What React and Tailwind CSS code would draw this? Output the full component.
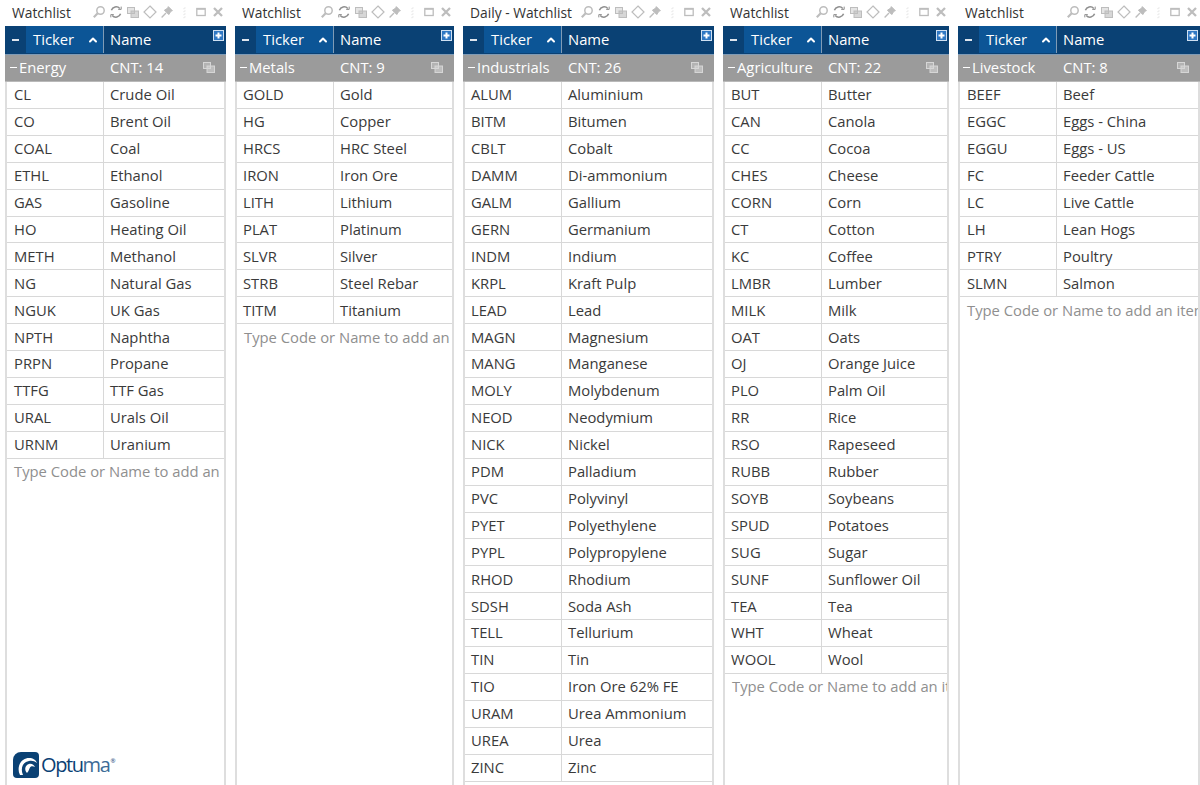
import React from 'react';
import { ChevronUp } from 'lucide-react';

const panels = [
  {
    title: 'Watchlist', width: 'w-[221px]', cellPad: 'pl-[7px]', group: 'Energy', cnt: 14,
    rows: [['CL', 'Crude Oil'], ['CO', 'Brent Oil'], ['COAL', 'Coal'], ['ETHL', 'Ethanol'], ['GAS', 'Gasoline'], ['HO', 'Heating Oil'], ['METH', 'Methanol'], ['NG', 'Natural Gas'], ['NGUK', 'UK Gas'], ['NPTH', 'Naphtha'], ['PRPN', 'Propane'], ['TTFG', 'TTF Gas'], ['URAL', 'Urals Oil'], ['URNM', 'Uranium']],
    logo: true,
  },
  {
    title: 'Watchlist', width: 'w-[219px]', cellPad: 'pl-[6px]', group: 'Metals', cnt: 9,
    rows: [['GOLD', 'Gold'], ['HG', 'Copper'], ['HRCS', 'HRC Steel'], ['IRON', 'Iron Ore'], ['LITH', 'Lithium'], ['PLAT', 'Platinum'], ['SLVR', 'Silver'], ['STRB', 'Steel Rebar'], ['TITM', 'Titanium']],
  },
  {
    title: 'Daily - Watchlist', width: 'w-[251px]', cellPad: 'pl-[6px]', group: 'Industrials', cnt: 26,
    rows: [['ALUM', 'Aluminium'], ['BITM', 'Bitumen'], ['CBLT', 'Cobalt'], ['DAMM', 'Di-ammonium'], ['GALM', 'Gallium'], ['GERN', 'Germanium'], ['INDM', 'Indium'], ['KRPL', 'Kraft Pulp'], ['LEAD', 'Lead'], ['MAGN', 'Magnesium'], ['MANG', 'Manganese'], ['MOLY', 'Molybdenum'], ['NEOD', 'Neodymium'], ['NICK', 'Nickel'], ['PDM', 'Palladium'], ['PVC', 'Polyvinyl'], ['PYET', 'Polyethylene'], ['PYPL', 'Polypropylene'], ['RHOD', 'Rhodium'], ['SDSH', 'Soda Ash'], ['TELL', 'Tellurium'], ['TIN', 'Tin'], ['TIO', 'Iron Ore 62% FE'], ['URAM', 'Urea Ammonium'], ['UREA', 'Urea'], ['ZINC', 'Zinc']],
  },
  {
    title: 'Watchlist', width: 'w-[226px]', cellPad: 'pl-[6px]', group: 'Agriculture', cnt: 22,
    rows: [['BUT', 'Butter'], ['CAN', 'Canola'], ['CC', 'Cocoa'], ['CHES', 'Cheese'], ['CORN', 'Corn'], ['CT', 'Cotton'], ['KC', 'Coffee'], ['LMBR', 'Lumber'], ['MILK', 'Milk'], ['OAT', 'Oats'], ['OJ', 'Orange Juice'], ['PLO', 'Palm Oil'], ['RR', 'Rice'], ['RSO', 'Rapeseed'], ['RUBB', 'Rubber'], ['SOYB', 'Soybeans'], ['SPUD', 'Potatoes'], ['SUG', 'Sugar'], ['SUNF', 'Sunflower Oil'], ['TEA', 'Tea'], ['WHT', 'Wheat'], ['WOOL', 'Wool']],
  },
  {
    title: 'Watchlist', width: 'w-[242px]', cellPad: 'pl-[7px]', group: 'Livestock', cnt: 8,
    rows: [['BEEF', 'Beef'], ['EGGC', 'Eggs - China'], ['EGGU', 'Eggs - US'], ['FC', 'Feeder Cattle'], ['LC', 'Live Cattle'], ['LH', 'Lean Hogs'], ['PTRY', 'Poultry'], ['SLMN', 'Salmon']],
  },
];

const CopyIcon = ({ className }) => (
  <svg viewBox="0 0 12 11" className={className} fill="none" stroke="currentColor">
    <rect x="0.5" y="0.5" width="7" height="6" fill="currentColor" fillOpacity="0.4" />
    <rect x="4" y="4" width="7.5" height="6.5" fill="currentColor" fillOpacity="0.6" />
  </svg>
);

// toolbar drawings, all on a 14px box so they sit evenly in their slots
const SearchIcon = () => (
  <svg viewBox="0 0 14 14" className="w-[14px] h-[14px]" fill="none" stroke="currentColor">
    <circle cx="8.5" cy="5.5" r="3.7" strokeWidth="1.5" />
    <path d="M5.7 8.3 1.8 12.2" strokeWidth="2.2" />
  </svg>
);

const RefreshIcon = () => (
  <svg viewBox="0 0 14 14" className="w-[14px] h-[14px] text-[#8f8f8f]" fill="none" stroke="currentColor" strokeWidth="1.5">
    <path d="M2.4 5.2A5 5 0 0 1 10.8 3.4" />
    <path d="M11.6 8.8A5 5 0 0 1 3.2 10.6" />
    <path d="M9.2 4.4h3V1.6M4.8 9.6h-3v2.8" strokeWidth="1" />
  </svg>
);

const DiamondIcon = () => (
  <svg viewBox="0 0 14 14" className="w-[14px] h-[14px]" fill="none" stroke="currentColor" strokeWidth="1.2">
    <path d="M7 1 13 7 7 13 1 7z" />
  </svg>
);

const PinIcon = () => (
  <svg viewBox="0 0 14 14" className="w-[14px] h-[14px]" fill="currentColor" stroke="currentColor">
    <path d="M8.3 1.6 12.4 5.7 10.9 6.2 8.8 9.6 4.4 5.2 7.8 3.1z" />
    <path d="M6 8 1.6 12.4" strokeWidth="1.4" />
  </svg>
);

const GripIcon = () => (
  <svg viewBox="0 0 14 14" className="w-[14px] h-[14px] text-[#ececec]" fill="none" stroke="currentColor" strokeWidth="1.4">
    <path d="M8.5 2.5 6.5 4M8.5 5.500 6.500 7M8.500 8.500 6.500 10M8.500 11.500 6.500 13" />
  </svg>
);

const SquareIcon = () => (
  <svg viewBox="0 0 14 14" className="w-[14px] h-[14px]" fill="none" stroke="currentColor">
    <rect x="2.8" y="3.5" width="8.4" height="7" strokeWidth="1.3" />
    <path d="M2.8 4h8.4" strokeWidth="1.6" />
  </svg>
);

const CloseIcon = () => (
  <svg viewBox="0 0 14 14" className="w-[14px] h-[14px]" fill="none" stroke="currentColor" strokeWidth="2.3">
    <path d="M3 3 11 11M11 3 3 11" />
  </svg>
);

const PlusBox = () => (
  <svg viewBox="0 0 11 11" className="w-[11px] h-[11px]">
    <rect x="0.5" y="0.5" width="10" height="10" fill="#2f78c4" stroke="#cfe0f2" />
    <path d="M5.5 2.5v6M2.5 5.5h6" stroke="white" strokeWidth="2" />
  </svg>
);

const toolbar = [SearchIcon, RefreshIcon, null, DiamondIcon, PinIcon, GripIcon, SquareIcon, CloseIcon];

function TitleBar({ title }) {
  return (
    <div className="h-[26px] shrink-0 flex items-center justify-between pl-[7px] text-[13.8px] text-[#333]">
      <span>{title}</span>
      <div className="flex items-center text-[#bdbdbd] pb-[2px]">
        {toolbar.map((Icon, i) => (
          <div key={i} className="w-[17px] flex justify-center">
            {Icon ? <Icon /> : <CopyIcon className="w-[12px] h-[11px]" />}
          </div>
        ))}
      </div>
    </div>
  );
}

function Panel({ panel }) {
  return (
    <div className={`${panel.width} shrink-0 flex flex-col`}>
      <TitleBar title={panel.title} />
      <div className="h-[29px] shrink-0 flex bg-[#0a4174] text-white border-b border-[#7f9bb6] pb-[1px]">
        <div className="w-[21px] flex items-center justify-center">
          <div className="w-[7px] h-[2px] bg-[#dfe6ee]" />
        </div>
        <div className="w-[77px] bg-[#0c5596] flex items-center justify-between pl-[7px] pr-[4px]">
          <span>Ticker</span>
          <ChevronUp size={12} strokeWidth={4} />
        </div>
        <div className="w-[1px] bg-[#7f9bb6]" />
        <div className="flex-1 flex items-center pl-[6px] relative">
          <span>Name</span>
          <div className="absolute top-[4px] right-[2px] flex">
            <PlusBox />
          </div>
        </div>
      </div>
      <div className="h-[27px] shrink-0 flex bg-[#9b9b9b] text-white border-b border-[#b9b9b9] pb-[1px]">
        <div className="w-[99px] pl-[5px] flex items-center gap-[2px] shrink-0">
          <div className="w-[7px] h-[1px] bg-white" />
          <span>{panel.group}</span>
        </div>
        <div className="flex-1 flex items-center justify-between pl-[6px] pr-[11px]">
          <span>CNT: {panel.cnt}</span>
          <CopyIcon className="w-[12px] h-[11px] text-[#d6d6d6]" />
        </div>
      </div>
      <div className="flex-1 min-h-0 flex flex-col border-x-2 border-[#dedede] overflow-hidden relative text-[#3a3a3a]">
        {panel.rows.map(([code, name]) => (
          <div key={code} className="h-[26.92px] shrink-0 flex items-center border-b border-[#d8d8d8]">
            <div className={`w-[97px] h-full flex items-center ${panel.cellPad} pb-[1px] border-r border-[#d8d8d8] shrink-0`}>{code}</div>
            <div className="pl-[6px] pb-[1px] whitespace-nowrap">{name}</div>
          </div>
        ))}
        <div className="h-[27px] shrink-0 flex items-center pl-[7px] pb-[2px] text-[#8f8f8f] whitespace-nowrap">
          Type Code or Name to add an item
        </div>
        {panel.logo && (
          <div className="absolute left-[6px] bottom-[7px] flex items-center">
            <svg viewBox="0 0 26 26" className="w-[26px] h-[26px]">
              <path d="M8 0h14a4 4 0 0 1 4 4v18a4 4 0 0 1-4 4H4a4 4 0 0 1-4-4V8a8 8 0 0 1 8-8z" fill="#0a4174" />
              <path d="M7 23C3 15 8 6 16 6c4 0 7 2 8 5-2.500-2-5-2.500-8-2C10 10 7 16 10 23z" fill="white" />
              <path d="M14 21c-3-3-2-8 2-9 3-.6 5 1 6 3-2-1-4-1-5 .5-1 1.500-1 3.500-3 5.500z" fill="white" />
            </svg>
            <span className="text-[20px] leading-none tracking-[-1.4px] text-[#0a4174] ml-[2px]">Optu<span className="text-[#3d6b96]">ma</span></span>
            <span className="text-[6px] text-[#0a4174] self-start mt-[5px] ml-[1px]">®</span>
          </div>
        )}
      </div>
    </div>
  );
}

export default function App() {
  return (
    <div className="w-[1200px] h-[785px] overflow-hidden bg-white flex gap-[9px] pl-[5px] font-['Open_Sans',sans-serif] text-[14.8px]">
      {panels.map((panel) => (
        <Panel key={panel.group} panel={panel} />
      ))}
    </div>
  );
}
